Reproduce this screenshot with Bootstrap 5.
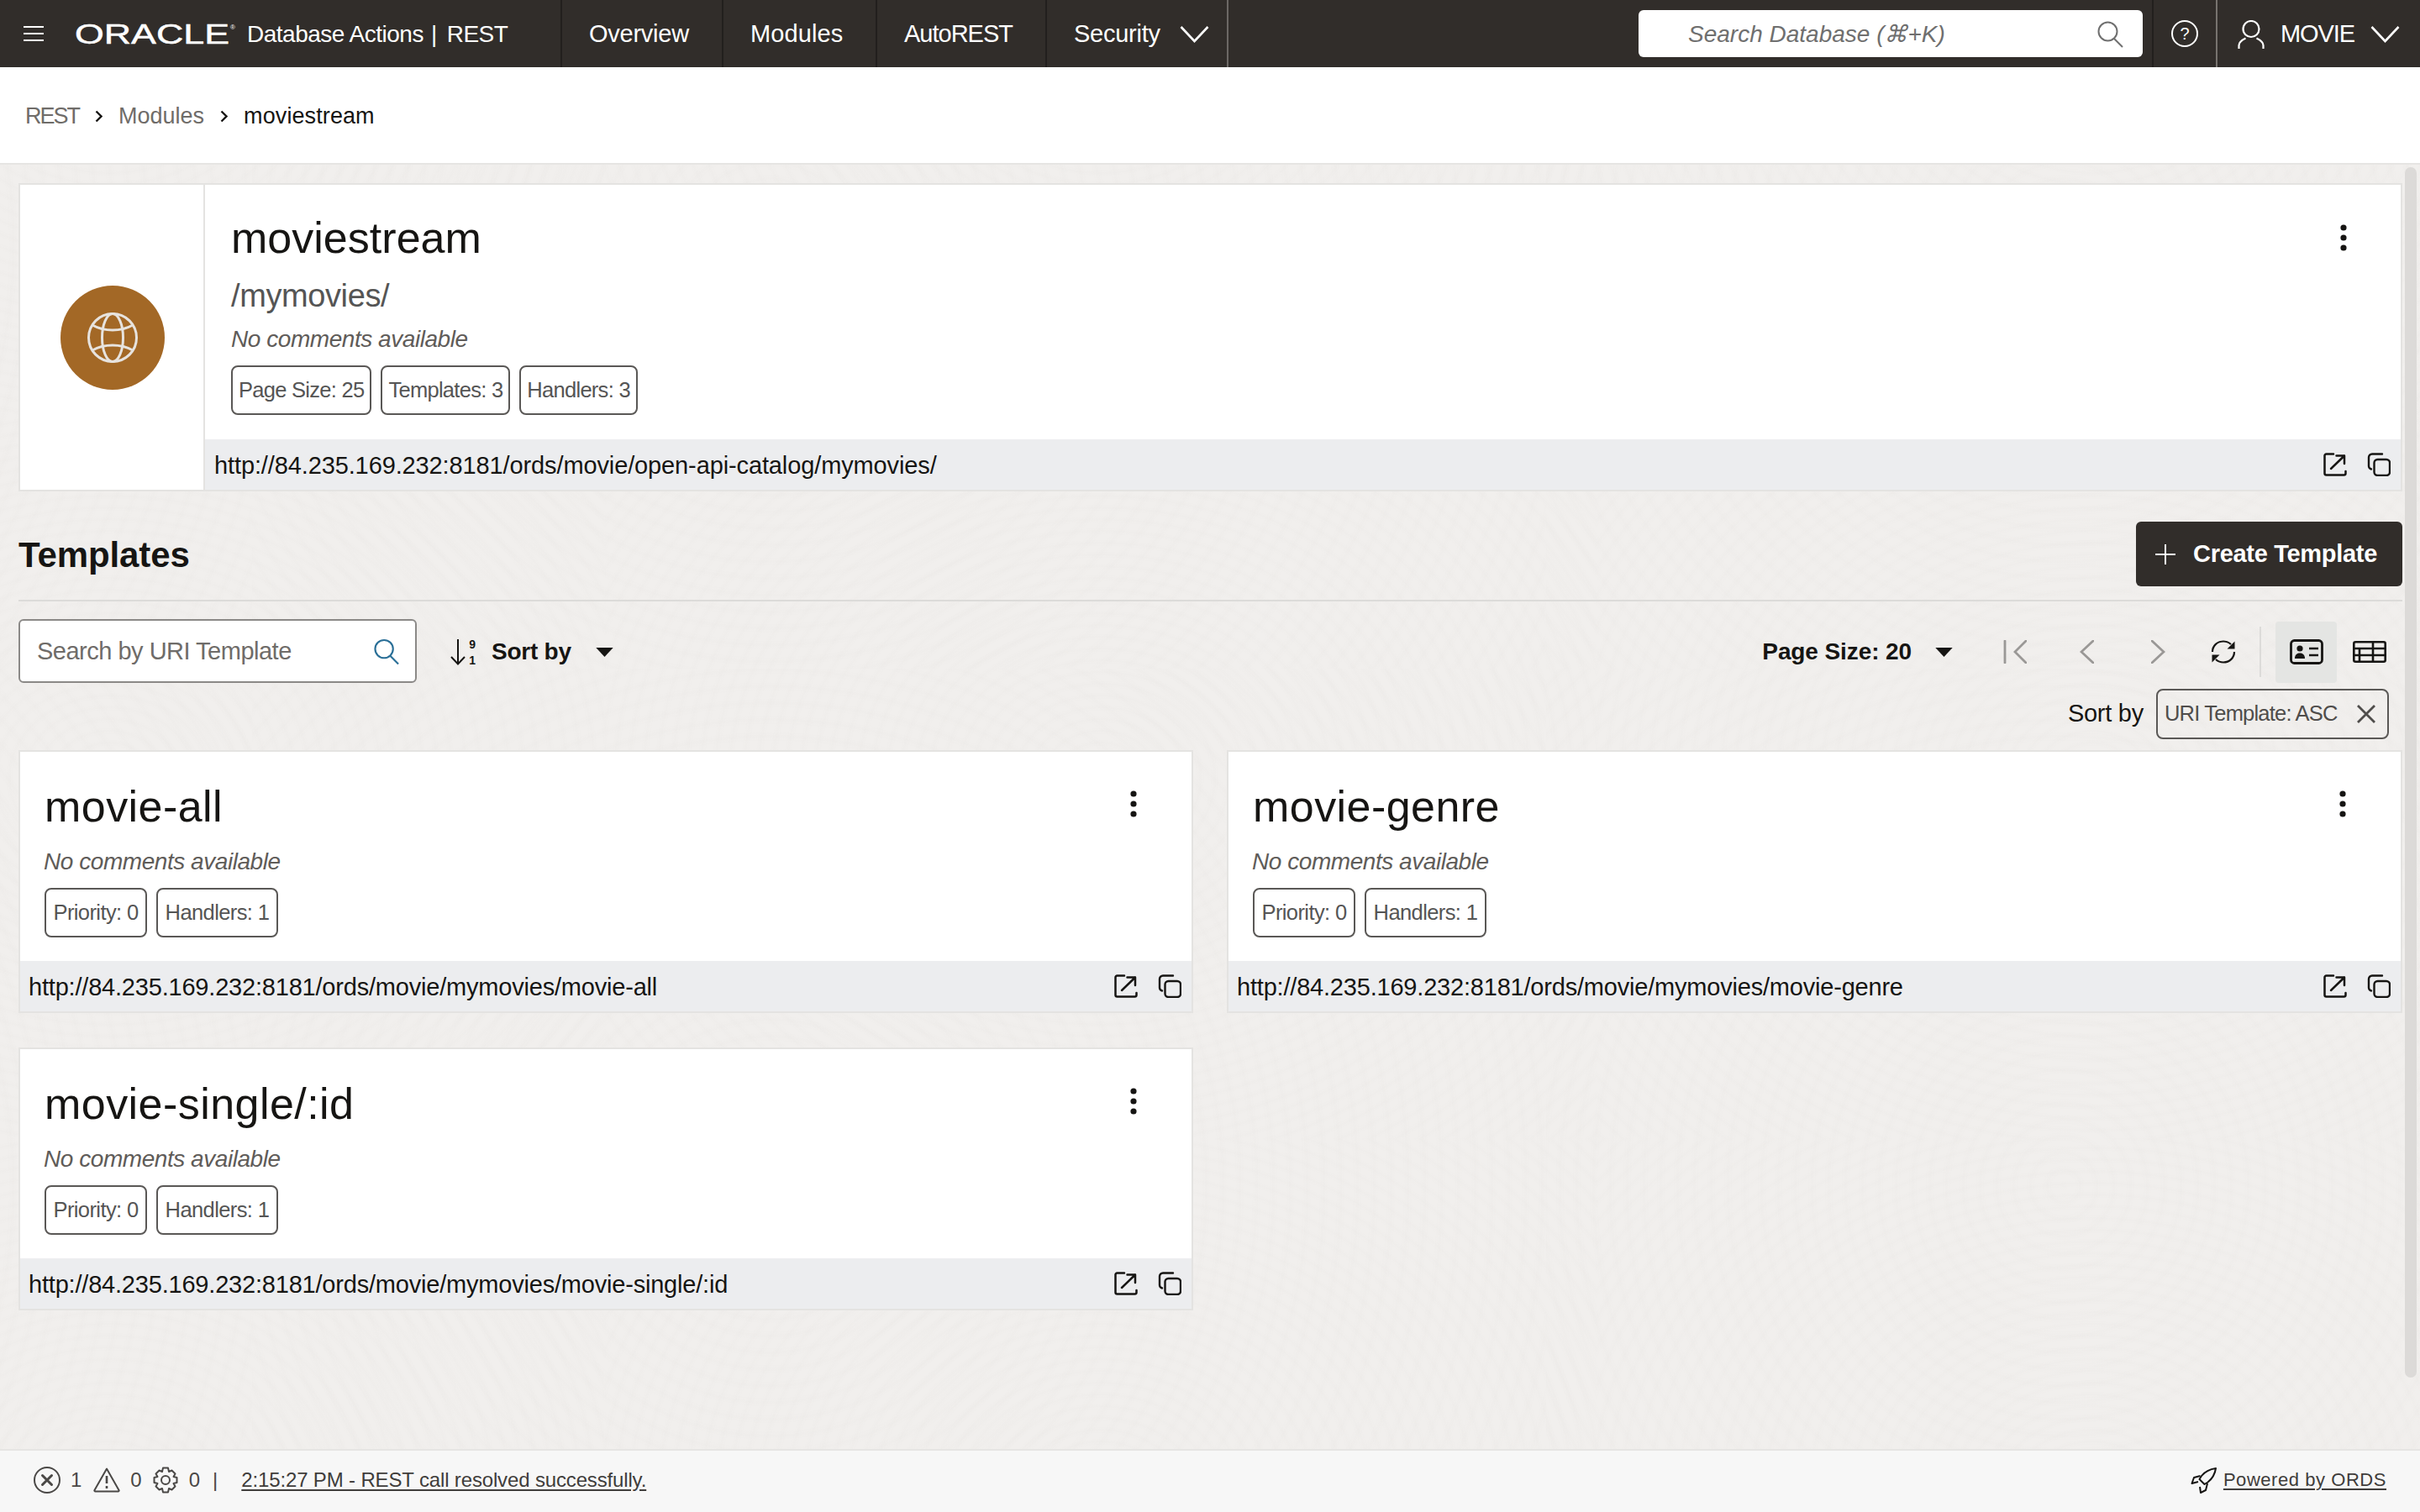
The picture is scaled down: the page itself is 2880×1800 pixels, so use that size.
<!DOCTYPE html>
<html lang="en">
<head>
<meta charset="utf-8">
<title>REST - moviestream</title>
<link rel="stylesheet" href="https://cdn.jsdelivr.net/npm/bootstrap@5.3.0/dist/css/bootstrap.min.css">
<style>
html,body{height:100%;overflow:hidden}
body{font-family:"Liberation Sans",Arial,sans-serif;color:#161513;background:#fff}
.shell{height:100vh}
.topbar{height:80px;background:#312d2a;color:#fff;padding:0;flex-wrap:nowrap;justify-content:flex-start;align-items:stretch}
.burger{width:24px;margin-left:28px;margin-right:37px}
.brand-logo{width:192px;height:36px;margin-right:13px;overflow:visible}
.brand-txt{font-size:28px;letter-spacing:-.5px;white-space:nowrap;color:#fff;width:373px;flex:none;padding-top:2px}
.brand-txt .sep{margin:0 12px 0 9px;font-weight:300}
.tnav{display:flex;align-items:center;padding:2px 0 0 32px;font-size:29px;letter-spacing:-.25px;color:#fff;border-left:2px solid #221f1d;text-decoration:none;white-space:nowrap;flex:none}
.tn-a{width:192px}.tn-b{width:183px;letter-spacing:.1px}.tn-c{width:202px;letter-spacing:-1px}
.tn-d{width:218px;border-right:2px solid #6c6865}
.tnav svg{margin-left:23px}
.tsearch{width:600px;height:56px;margin:12px 11px 12px auto;background:#fff;border-radius:6px;color:#6f6f6f;font-style:italic;font-size:28px;padding:2px 22px 0 59px}
.thelp{width:78px;border-left:2px solid #221f1d;border-right:2px solid #77736f}
.tuser{padding:2px 24px 0 24px;gap:19px;font-size:29px;letter-spacing:-1.1px}
.crumbs{height:116px;background:#fff;border-bottom:2px solid #e6e5e3;padding:3px 30px 0;flex:none}
.crumbs .breadcrumb{font-size:27px;margin:0;--bs-breadcrumb-divider:none}
.crumbs a{color:#6f6c69;text-decoration:none}
.crumbs .cr-root{letter-spacing:-2px}
.crumbs .cur{color:#161513;letter-spacing:.1px}
.crumbs svg{margin:0 19px}
.stage{position:relative;overflow:hidden;flex:1 1 0;padding:22px 21px 0 22px;background-color:#f1efed;background-image:
 repeating-radial-gradient(ellipse 62% 70% at 50% 50%,rgba(70,60,50,.009) 0,transparent 5px,transparent 11px,rgba(70,60,50,.009) 17px),
 repeating-radial-gradient(ellipse 55% 75% at 40% 55%,rgba(70,60,50,.007) 0,transparent 6px,transparent 13px,rgba(70,60,50,.007) 20px);
 background-size:1180px 860px,1540px 1120px;background-position:1900px 300px,300px 600px}
.rail{position:absolute;top:3px;right:4px;width:14px;height:1441px;border-radius:7px;background:#dcdad8}
.mcard{background:#fff;border:2px solid #e4e3e1;border-radius:0}
.mcard.head{height:367px}
.iconcol{width:220px;flex:none;border-right:2px solid #e4e3e1;padding-left:2px}
.disc{width:124px;height:124px;border-radius:50%;background:#a36826}
.h-title{font-size:52px;font-weight:400;letter-spacing:.02px;line-height:60px;margin:0;color:#161513}
.h-path{font-size:38px;line-height:42px;letter-spacing:-.4px;color:#555;margin:0}
.note{font-size:28px;font-style:italic;letter-spacing:-.45px;color:#5f5c59;line-height:34px;margin:0}
.chips{gap:11px}
.chip{height:59px;display:inline-flex;align-items:center;padding:0 7px;font-size:25.5px;letter-spacing:-.72px;border:2px solid #5a5856;border-radius:8px;color:#555;background:#fff;white-space:nowrap}
.band{height:60px;background:#ecedef;padding:3px 12px 0 11px;font-size:29px;letter-spacing:-.12px;color:#161513;flex:none}
.band .acts{gap:24px;margin-top:-3px}
.title-row{height:129px;padding-top:20px}
.tpl-h{font-size:42px;font-weight:700;letter-spacing:-.1px;margin:3px 0 0}
.create{background:#312d2a;border:0;color:#fff;height:77px;width:317px;font-weight:700;font-size:29px;letter-spacing:-.3px;border-radius:6px;gap:21px;padding:0 0 0 23px}
.create:hover{background:#312d2a;color:#fff}
.rule{border-top:2px solid #dcdbd9;height:0}
.tools{height:102px;padding-top:21px;align-items:flex-start}
.fbox{width:474px;height:76px;border:2px solid #8b8987;border-radius:6px;background:#fff;padding:2px 18px 0 20px;font-size:29px;letter-spacing:-.5px;color:#6f6c69}
.sortbtn{font-weight:700;font-size:28px;letter-spacing:-.25px;margin-left:39px;height:76px;padding-top:2px}
.pager{height:76px;margin-left:auto;font-weight:700;font-size:28px;letter-spacing:-.1px;padding-top:2px}
.viewsel{width:73px;height:73px;background:#e4e5e3;border-radius:4px}
.vsep{width:2px;height:60px;background:#dcdbd9}
.sortline{height:61px;margin-top:1px;padding-right:16px;font-size:29px;letter-spacing:-.25px}
.sortchip{width:277px;height:60px;border:2px solid #5a5856;border-radius:8px;margin-left:15px;padding:0 13px 0 8px;font-size:25.5px;letter-spacing:-.8px;color:#4f4d4b}
.grid-t{display:grid;grid-template-columns:1398px 1399px;column-gap:40px;row-gap:41px;margin-top:13px}
.tcard{height:313px}
.tcard .band{padding-left:10px;letter-spacing:-.2px}
.tbody{padding:35px 26px 0 28px;flex:1}
.tbody .h-title{letter-spacing:.45px;margin-left:1px}
.tbody .note{margin-top:19px}
.tbody .chips{margin-top:14px;margin-left:1px}
.tbody .chip{padding:0 8.500px;letter-spacing:-.6px}
.kb{margin-top:11px;margin-right:38px}
.botbar{height:75px;flex:none;background:#f7f7f7;border-top:2px solid #e6e5e3;padding:0 40px 4px;font-size:24px;color:#4a4846}
.botbar a{color:#3f3d3b;text-decoration:underline;text-underline-offset:3px}
.stat{gap:12px}
.msg{letter-spacing:-.15px;margin-left:16px}
.pow{letter-spacing:.55px;font-size:22px}
</style>
</head>
<body>
<svg width="0" height="0" class="position-absolute">
<symbol id="i-open" viewBox="0 0 28 28"><g fill="none" stroke="#161513" stroke-width="2.500" stroke-linecap="round" stroke-linejoin="round"><path d="M12 1.500H3.500a2 2 0 0 0-2 2v21a2 2 0 0 0 2 2h21a2 2 0 0 0 2-2V22"/><path d="M9 19 25 3.500M15.500 3.500H25V13"/></g></symbol>
<symbol id="i-copy" viewBox="0 0 28 28"><g fill="none" stroke="#161513" stroke-width="2.400" stroke-linecap="round"><path d="M18 1.500H6a4 4 0 0 0-4 4V16a4 4 0 0 0 3 3.500"/><rect x="8.500" y="8" width="18.500" height="19" rx="4"/></g></symbol>
<symbol id="i-keb" viewBox="0 0 10 32"><circle cx="5" cy="4" r="3.600" fill="#161513"/><circle cx="5" cy="16" r="3.600" fill="#161513"/><circle cx="5" cy="28" r="3.600" fill="#161513"/></symbol>
<symbol id="i-caret" viewBox="0 0 22 14"><path d="M0 1h22L11 13z" fill="#161513"/></symbol>
</svg>
<div class="shell d-flex flex-column">
<nav class="navbar topbar">
  <svg class="burger align-self-center" height="20" viewBox="0 0 24 20"><path d="M0 2h24M0 10h24M0 18h24" stroke="#fff" stroke-width="2"/></svg>
  <svg class="brand-logo align-self-center" viewBox="0 0 192 36"><text x="0" y="30" font-family="Liberation Sans" font-size="34" fill="#fff" stroke="#fff" stroke-width=".5" textLength="184" lengthAdjust="spacingAndGlyphs">ORACLE</text><text x="185" y="13" font-family="Liberation Sans" font-size="8" fill="#fff">®</text></svg>
  <div class="brand-txt align-self-center">Database Actions<span class="sep">|</span>REST</div>
  <a class="tnav tn-a" href="#">Overview</a>
  <a class="tnav tn-b" href="#">Modules</a>
  <a class="tnav tn-c" href="#">AutoREST</a>
  <a class="tnav tn-d" href="#">Security<svg width="35" height="22" viewBox="0 0 35 22"><path d="M1.500 2 17.500 19 33.500 2" fill="none" stroke="#fff" stroke-width="2.600"/></svg></a>
  <div class="tsearch d-flex align-items-center justify-content-between">Search Database (⌘+K)
    <svg width="32" height="32" viewBox="0 0 32 32"><circle cx="12.500" cy="12.500" r="11" fill="none" stroke="#6f6f6f" stroke-width="2"/><path d="m20 21 10 10" stroke="#6f6f6f" stroke-width="2"/></svg></div>
  <div class="thelp d-flex align-items-center justify-content-center"><svg width="32" height="32" viewBox="0 0 32 32"><circle cx="16" cy="16" r="15" fill="none" stroke="#fff" stroke-width="2"/><text x="16" y="23" font-family="Liberation Sans" font-size="20" fill="#fff" text-anchor="middle">?</text></svg></div>
  <div class="tuser d-flex align-items-center"><svg width="32" height="34" viewBox="0 0 32 34"><ellipse cx="16" cy="10.500" rx="9.500" ry="9.500" fill="none" stroke="#fff" stroke-width="2.200"/><path d="M1.500 34v-4c0-4 3-6 8-8.500M30.500 34v-4c0-4-3-6-8-8.500" fill="none" stroke="#fff" stroke-width="2.200"/></svg>MOVIE<svg width="35" height="22" viewBox="0 0 35 22"><path d="M1.500 2 17.500 19 33.500 2" fill="none" stroke="#fff" stroke-width="2.600"/></svg></div>
</nav>
<div class="crumbs d-flex align-items-center">
  <nav class="breadcrumb d-flex align-items-center p-0">
    <a class="cr-root" href="#">REST</a><svg width="9" height="15" viewBox="0 0 9 15"><path d="m1.500 1.500 6 6-6 6" fill="none" stroke="#161513" stroke-width="2.400"/></svg>
    <a href="#">Modules</a><svg width="9" height="15" viewBox="0 0 9 15"><path d="m1.500 1.500 6 6-6 6" fill="none" stroke="#161513" stroke-width="2.400"/></svg>
    <span class="cur">moviestream</span>
  </nav>
</div>
<main class="stage">
  <div class="rail"></div>
  <section class="mcard head d-flex">
    <div class="iconcol d-flex align-items-center justify-content-center">
      <div class="disc d-flex align-items-center justify-content-center">
        <svg width="60" height="60" viewBox="0 0 60 60" fill="none" stroke="#e7e3de" stroke-width="3"><circle cx="30" cy="30" r="28.500"/><ellipse cx="30" cy="30" rx="12.500" ry="28.500"/><path d="M6 15c14 8 34 8 48 0M6 45c14-8 34-8 48 0"/></svg>
      </div>
    </div>
    <div class="d-flex flex-column flex-grow-1">
      <div class="d-flex flex-grow-1" style="padding-left:31px">
        <div class="flex-grow-1" style="padding-top:33px">
          <h1 class="h-title">moviestream</h1>
          <p class="h-path" style="margin-top:18px">/mymovies/</p>
          <p class="note" style="margin-top:14px">No comments available</p>
          <div class="d-flex chips" style="margin-top:14px"><span class="chip">Page Size: 25</span><span class="chip">Templates: 3</span><span class="chip">Handlers: 3</span></div>
        </div>
        <svg width="10" height="32" style="margin:47px 63px 0 0"><use href="#i-keb"/></svg>
      </div>
      <div class="band d-flex align-items-center justify-content-between"><span>http://84.235.169.232:8181/ords/movie/open-api-catalog/mymovies/</span><span class="acts d-flex"><svg width="28" height="28"><use href="#i-open"/></svg><svg width="28" height="28"><use href="#i-copy"/></svg></span></div>
    </div>
  </section>
  <div class="title-row d-flex justify-content-between align-items-center">
    <h2 class="tpl-h">Templates</h2>
    <button class="btn create d-flex align-items-center justify-content-start"><svg width="24" height="24" viewBox="0 0 24 24"><path d="M12 0v24M0 12h24" stroke="#fff" stroke-width="2"/></svg>Create Template</button>
  </div>
  <div class="rule"></div>
  <div class="tools d-flex">
    <div class="fbox d-flex align-items-center justify-content-between">Search by URI Template
      <svg width="31" height="32" viewBox="0 0 32 32"><circle cx="12.500" cy="12.500" r="11" fill="none" stroke="#2a6f97" stroke-width="2.200"/><path d="m20 21 10 10" stroke="#2a6f97" stroke-width="2.200"/></svg></div>
    <div class="sortbtn d-flex align-items-center">
      <svg width="34" height="32" viewBox="0 0 34 32" class="me-3"><path d="M10 1v29M2 22l8 8.500 8-8.500" fill="none" stroke="#161513" stroke-width="2"/><text x="27" y="12" font-family="Liberation Sans" font-size="14" text-anchor="middle" fill="#161513">9</text><text x="27" y="31" font-family="Liberation Sans" font-size="14" text-anchor="middle" fill="#161513">1</text></svg>
      Sort by<svg width="21" height="13" style="margin-left:29px"><use href="#i-caret"/></svg>
    </div>
    <div class="pager d-flex align-items-center">
      Page Size: 20<svg width="21" height="13" style="margin-left:28px;margin-right:60px"><use href="#i-caret"/></svg>
      <svg width="28" height="28" viewBox="0 0 28 28" style="margin-right:63px" fill="none" stroke="#9a9896" stroke-width="2.800" stroke-linecap="round"><path d="M2 1v26M27 1 14 14l13 13"/></svg>
      <svg width="17" height="28" viewBox="0 0 17 28" style="margin-right:68px" fill="none" stroke="#9a9896" stroke-width="2.800" stroke-linecap="round"><path d="M16 1 2 14l14 13"/></svg>
      <svg width="17" height="28" viewBox="0 0 17 28" style="margin-right:54px" fill="none" stroke="#9a9896" stroke-width="2.800" stroke-linecap="round"><path d="m1 1 14 13L1 27"/></svg>
      <svg width="30" height="30" viewBox="0 0 30 30" style="margin-right:28px"><path d="M2 15C2 8 7.500 2.500 15 2.500c3.500 0 6.500 1.200 9 3.500M28 15c0 7-5.500 12.500-13 12.500-3.500 0-6.500-1.200-9-3.500" fill="none" stroke="#161513" stroke-width="2.200"/><path d="M28.500 2.500v9h-9zM1.500 27.500v-9h9z" fill="#161513"/></svg>
      <span class="vsep" style="margin-right:17px"></span>
      <span class="viewsel d-flex align-items-center justify-content-center"><svg width="40" height="30" viewBox="0 0 40 30"><rect x="1.500" y="1.500" width="37" height="27" rx="4" fill="none" stroke="#161513" stroke-width="2.800"/><circle cx="12" cy="11" r="3.600" fill="#161513"/><path d="M6 23c0-5 3-6.500 6-6.500s6 1.500 6 6.500z" fill="#161513"/><path d="M23 11h11M23 19h11" stroke="#161513" stroke-width="2.600"/></svg></span>
      <svg width="40" height="26" viewBox="0 0 40 26" style="margin:0 19px 0 19px" fill="none" stroke="#161513" stroke-width="2.600"><rect x="1.300" y="1.300" width="37.400" height="23.400" rx="2"/><path d="M1.200 9h37.600M1.200 17h37.600M8 9v16M24 1v24"/></svg>
    </div>
  </div>
  <div class="sortline d-flex align-items-center justify-content-end">Sort by
    <span class="sortchip d-flex align-items-center justify-content-between">URI Template: ASC<svg width="24" height="24" viewBox="0 0 24 24"><path d="m2 2 20 20M22 2 2 22" stroke="#4f4d4b" stroke-width="2.800"/></svg></span>
  </div>
  <div class="grid-t">
    <article class="mcard tcard d-flex flex-column">
      <div class="tbody d-flex justify-content-between">
        <div><h3 class="h-title">movie-all</h3><p class="note">No comments available</p><div class="d-flex chips"><span class="chip">Priority: 0</span><span class="chip">Handlers: 1</span></div></div>
        <svg class="kb" width="10" height="32"><use href="#i-keb"/></svg>
      </div>
      <div class="band d-flex align-items-center justify-content-between"><span>http://84.235.169.232:8181/ords/movie/mymovies/movie-all</span><span class="acts d-flex"><svg width="28" height="28"><use href="#i-open"/></svg><svg width="28" height="28"><use href="#i-copy"/></svg></span></div>
    </article>
    <article class="mcard tcard d-flex flex-column">
      <div class="tbody d-flex justify-content-between">
        <div><h3 class="h-title">movie-genre</h3><p class="note">No comments available</p><div class="d-flex chips"><span class="chip">Priority: 0</span><span class="chip">Handlers: 1</span></div></div>
        <svg class="kb" width="10" height="32"><use href="#i-keb"/></svg>
      </div>
      <div class="band d-flex align-items-center justify-content-between"><span>http://84.235.169.232:8181/ords/movie/mymovies/movie-genre</span><span class="acts d-flex"><svg width="28" height="28"><use href="#i-open"/></svg><svg width="28" height="28"><use href="#i-copy"/></svg></span></div>
    </article>
    <article class="mcard tcard d-flex flex-column">
      <div class="tbody d-flex justify-content-between">
        <div><h3 class="h-title">movie-single/:id</h3><p class="note">No comments available</p><div class="d-flex chips"><span class="chip">Priority: 0</span><span class="chip">Handlers: 1</span></div></div>
        <svg class="kb" width="10" height="32"><use href="#i-keb"/></svg>
      </div>
      <div class="band d-flex align-items-center justify-content-between"><span>http://84.235.169.232:8181/ords/movie/mymovies/movie-single/:id</span><span class="acts d-flex"><svg width="28" height="28"><use href="#i-open"/></svg><svg width="28" height="28"><use href="#i-copy"/></svg></span></div>
    </article>
  </div>
</main>
<footer class="botbar d-flex align-items-center justify-content-between">
  <div class="d-flex align-items-center stat">
    <svg width="32" height="32" viewBox="0 0 32 32" fill="none" stroke="#4a4846" stroke-width="2"><circle cx="16" cy="16" r="15"/><path d="m10.500 10.500 11 11m0-11-11 11" stroke-width="3" stroke-linecap="round"/></svg><span>1</span>
    <svg width="32" height="30" viewBox="0 0 32 30" fill="none" stroke="#4a4846" stroke-width="2" stroke-linejoin="round" style="margin-left:2px"><path d="M16 1.500 1.500 27a1 1 0 0 0 1 1.500h27a1 1 0 0 0 1-1.500z"/><path d="M16 10v9M16 22v3" stroke-width="2.600"/></svg><span>0</span>
    <svg width="32" height="32" viewBox="0 0 32 32" fill="none" stroke="#4a4846" stroke-width="2" stroke-linejoin="round"><circle cx="16" cy="16" r="5"/><path d="M13 1.500h6l1 4.500 3.500-1.500 4 4-2 3.500 4 1v6l-4 1 2 3.500-4 4-3.500-1.500-1 4.500h-6l-1-4.500-3.500 1.500-4-4 2-3.500-4-1v-6l4-1-2-3.500 4-4 3.500 1.500z"/></svg><span>0</span>
    <span style="margin-left:3px">|</span><a class="msg" href="#">2:15:27 PM - REST call resolved successfully.</a>
  </div>
  <div class="d-flex align-items-center" style="gap:7px">
    <svg width="32" height="32" viewBox="0 0 32 32" fill="none" stroke="#161513" stroke-width="2" stroke-linejoin="round"><path d="M30 2c-7 1-13 4-17 9l-2.500 4 6 6 4-2.500c5-4 8.500-9.500 9.500-16.500z"/><path d="M11.500 11 4 13l-2.500 7 7.500-2M20 20l-2 8-6 3-1-7"/></svg>
    <a class="pow" href="#">Powered by ORDS</a>
  </div>
</footer>
</div>
</body>
</html>
